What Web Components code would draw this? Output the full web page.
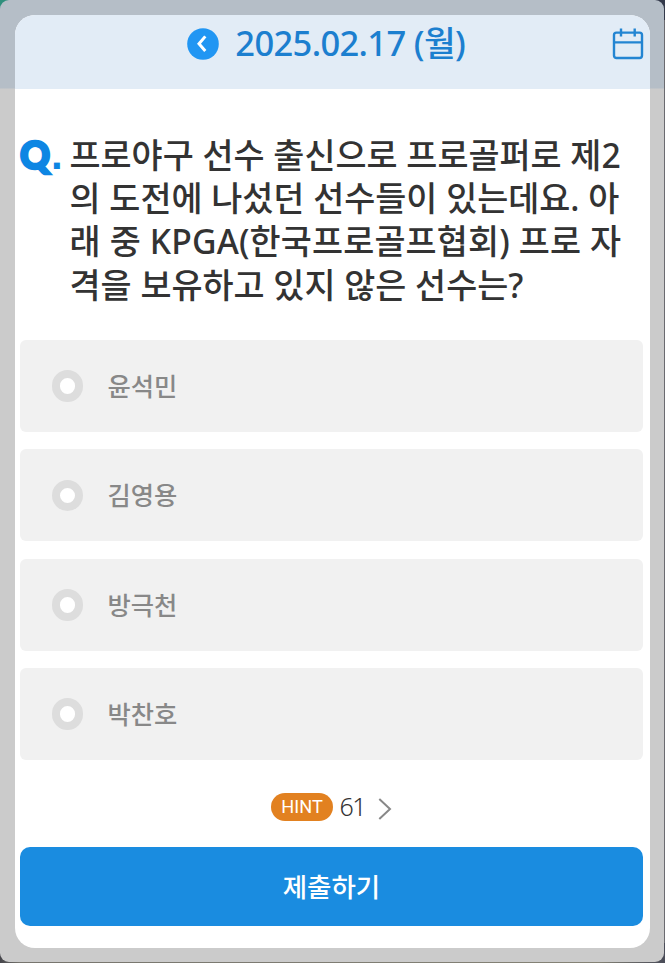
<!DOCTYPE html>
<html lang="ko">
<head>
<meta charset="utf-8">
<meta name="viewport" content="width=device-width, initial-scale=1">
<title>Quiz</title>
<style>
  html, body {
    margin: 0;
    height: 100%;
    overflow: hidden;
  }
  body {
    background: linear-gradient(90deg, #2f8f7c 0, #2f8f7c 20px, #33394a 60px) 0 0 / 100% 20px no-repeat,
                linear-gradient(90deg, #45454b 0, #77756e 20px, #858376 90%, #4a4c58 100%) 0 100% / 100% 20px no-repeat,
                #6b6b70;
    font-family: "Noto Sans", "Noto Sans CJK KR", sans-serif;
    font-weight: 500;
  }
</style>
</head>
<body>
<quiz-popup>
  <quiz-header slot="header">2025.02.17 (월)</quiz-header>
  <quiz-question>
    <div>프로야구 선수 출신으로 프로골퍼로 제2</div>
    <div>의 도전에 나섰던 선수들이 있는데요. 아</div>
    <div style="letter-spacing: .15px">래 중 KPGA(한국프로골프협회) 프로 자</div>
    <div>격을 보유하고 있지 않은 선수는?</div>
  </quiz-question>
  <quiz-options>
    <quiz-option>윤석민</quiz-option>
    <quiz-option>김영용</quiz-option>
    <quiz-option>방극천</quiz-option>
    <quiz-option>박찬호</quiz-option>
  </quiz-options>
  <quiz-hint>61</quiz-hint>
  <quiz-submit>제출하기</quiz-submit>
</quiz-popup>

<script>
function attach(el, html) {
  const template = document.createElement('template')
  template.innerHTML = html
  el.attachShadow({ mode: 'open' }).appendChild(template.content.cloneNode(true))
}

class QuizPopup extends HTMLElement {
  constructor() {
    super()
    attach(this, `<style>
      :host {
        display: flex;
        box-sizing: border-box;
        width: calc(100% - 1px);
        height: calc(100vh - 1.5px);
        padding: 15px 14px 13.5px 15px;
        border-radius: 9px;
        background: linear-gradient(#b5bec7 88px, #cbcbcb 89px);
      }
      .card {
        display: flex;
        flex-direction: column;
        flex: 1;
        overflow: hidden;
        border-radius: 20px;
        background: white;
      }
      .body {
        display: flex;
        flex-direction: column;
        padding: 0 7px 0 5px;
      }
    </style>
    <div class="card">
      <slot name="header"></slot>
      <div class="body"><slot></slot></div>
    </div>`)
  }
}

class QuizHeader extends HTMLElement {
  constructor() {
    super()
    attach(this, `<style>
      :host {
        display: grid;
        grid-template-columns: 1fr auto 1fr;
        box-sizing: border-box;
        height: 73.5px;
        padding: 0 6px 0 0;
        background: #e2ecf6;
        color: #1c7fcf;
      }
      .date {
        grid-column: 2;
        display: flex;
        align-items: center;
        gap: 16.5px;
        height: 57px;
        margin-right: 7px;
        font-size: 34.5px;
        line-height: 56px;
        letter-spacing: -.65px;
        white-space: nowrap;
      }
      .date span {
        margin-top: -2px;
      }
      .calendar {
        justify-self: end;
        margin-top: 13px;
      }
      svg { display: block; }
    </style>
    <div class="date">
      <svg width="32" height="32" viewBox="0 0 32 32" fill="none">
        <circle cx="16" cy="16" r="15.8" fill="#2196f3"/>
        <path d="M18.3 8.4 12 15.8l6.3 7.2" stroke="white" stroke-width="3"/>
      </svg>
      <span><slot></slot></span>
    </div>
    <svg class="calendar" width="32" height="32" viewBox="0 0 32 32" fill="none" stroke="#2385d2" stroke-width="2.4">
      <rect x="2" y="4.6" width="28" height="25.4" rx="2.4"/>
      <path d="M2 14.4h28M9 .4v8M22.7 .4v8"/>
    </svg>`)
  }
}

class QuizQuestion extends HTMLElement {
  constructor() {
    super()
    attach(this, `<style>
      :host {
        display: flex;
        height: 206px;
        padding-top: 45.5px;
        color: #333;
        font-size: 33.75px;
        line-height: 43.2px;
        white-space: nowrap;
      }
      .mark {
        flex: none;
        width: 49.5px;
        color: #0d86e3;
        font: 900 37px/42px Lato, sans-serif;
        -webkit-text-stroke: 2.6px #0d86e3;
      }
      .dot {
        margin-left: 1px;
        font: bold 42px/30px "Liberation Sans", sans-serif;
        -webkit-text-stroke: 0;
      }
    </style>
    <div class="mark">Q<span class="dot">.</span></div>
    <div><slot></slot></div>`)
  }
}

class QuizOptions extends HTMLElement {
  constructor() {
    super()
    attach(this, `<style>
      :host {
        display: flex;
        flex-direction: column;
        gap: 17.4px;
      }
    </style>
    <slot></slot>`)
  }
}

class QuizOption extends HTMLElement {
  constructor() {
    super()
    attach(this, `<style>
      :host {
        display: flex;
        align-items: center;
        gap: 24.5px;
        box-sizing: border-box;
        height: 92px;
        padding-left: 31.5px;
        border-radius: 6px;
        background: #f1f1f1;
        color: #888;
        font-size: 25.3px;
        line-height: 36px;
      }
      .radio {
        box-sizing: border-box;
        width: 31.5px;
        height: 31.5px;
        border: 8.5px solid #ddd;
        border-radius: 50%;
        background: white;
      }
    </style>
    <span class="radio"></span>
    <span><slot></slot></span>`)
  }
}

class QuizHint extends HTMLElement {
  constructor() {
    super()
    attach(this, `<style>
      :host {
        display: flex;
        align-items: center;
        justify-content: center;
        height: 87px;
        color: #333;
        font-size: 25px;
        font-weight: 350;
        letter-spacing: -1.6px;
      }
      .badge {
        width: 62px;
        height: 28px;
        margin: 7px 6.5px 0 0;
        border-radius: 14px;
        background: #e28120;
        color: white;
        font: 400 18.2px/28px Roboto, sans-serif;
        letter-spacing: 0;
        text-align: center;
      }
      .count {
        margin-top: 5px;
        line-height: 30px;
      }
      svg { margin: 10px 0 0 13px; }
    </style>
    <span class="badge">HINT</span>
    <span class="count"><slot></slot></span>
    <svg width="14" height="22" viewBox="0 0 14 22" fill="none">
      <path d="M1.3 1 12 11 1.3 21" stroke="#888" stroke-width="2"/>
    </svg>`)
  }
}

class QuizSubmit extends HTMLElement {
  constructor() {
    super()
    attach(this, `<style>
      :host {
        display: flex;
        align-items: center;
        justify-content: center;
        height: 79px;
        border-radius: 10px;
        background: #1a8ce0;
        color: white;
        font-size: 26.5px;
        line-height: 40px;
      }
    </style>
    <span><slot></slot></span>`)
  }
}

customElements.define('quiz-popup', QuizPopup)
customElements.define('quiz-header', QuizHeader)
customElements.define('quiz-question', QuizQuestion)
customElements.define('quiz-options', QuizOptions)
customElements.define('quiz-option', QuizOption)
customElements.define('quiz-hint', QuizHint)
customElements.define('quiz-submit', QuizSubmit)
</script>
</body>
</html>
